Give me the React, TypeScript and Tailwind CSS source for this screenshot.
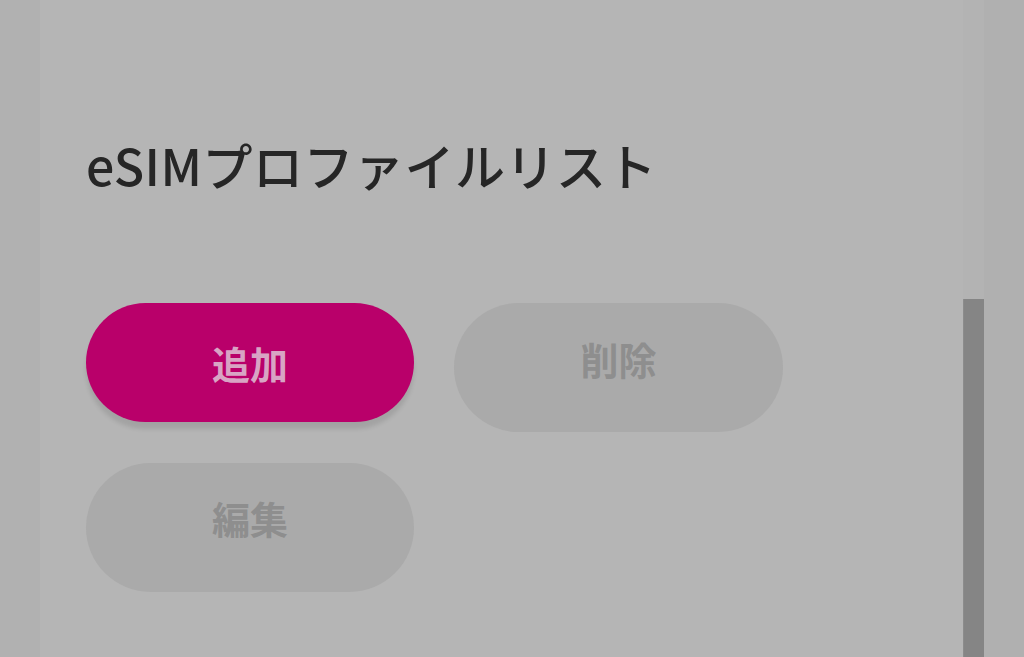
import React from 'react'

const font = { fontFamily: '"Noto Sans CJK JP", "Noto Sans", sans-serif' }

const App: React.FC = () => {
  return (
    <div className="flex h-[657px] w-[1024px] overflow-hidden bg-[#b1b1b1]" style={font}>
      {/* left gutter */}
      <div className="w-[40px] shrink-0 bg-[#b1b1b1]" />

      {/* main panel */}
      <div className="w-[923px] shrink-0 bg-[#b5b5b5] pl-[46px] pt-[134px]">
        <h1 className="text-[50px] font-medium leading-[60px] tracking-[0.5px] text-[#262626]">
          eSIMプロファイルリスト
        </h1>

        <div className="mt-[109px] grid w-[697px] grid-cols-[328px_329px] gap-x-[40px] gap-y-[31px]">
          <button className="flex h-[119px] items-center justify-center self-start rounded-full bg-[#b9006a] text-[38px] font-bold text-[#d8a4c4] shadow-[0_7px_4px_rgba(0,0,0,0.10)]">
            追加
          </button>
          <button className="flex h-[129px] items-start justify-center rounded-full bg-[#aaaaaa] pt-[32px] text-[38px] font-bold leading-[48px] text-[#8e8e8e]">
            削除
          </button>
          <button className="flex h-[129px] items-start justify-center rounded-full bg-[#aaaaaa] pt-[31px] text-[38px] font-bold leading-[48px] text-[#8e8e8e]">
            編集
          </button>
        </div>
      </div>

      {/* scrollbar column */}
      <div className="flex w-[61px] shrink-0 flex-col bg-[#b0b0b0]">
        <div className="flex w-[21px] flex-1 flex-col bg-[#b3b3b3]">
          <div className="mt-[299px] flex-1 border-l border-[#8c8c8c] bg-[#858585]" />
        </div>
      </div>
    </div>
  )
}

export default App
